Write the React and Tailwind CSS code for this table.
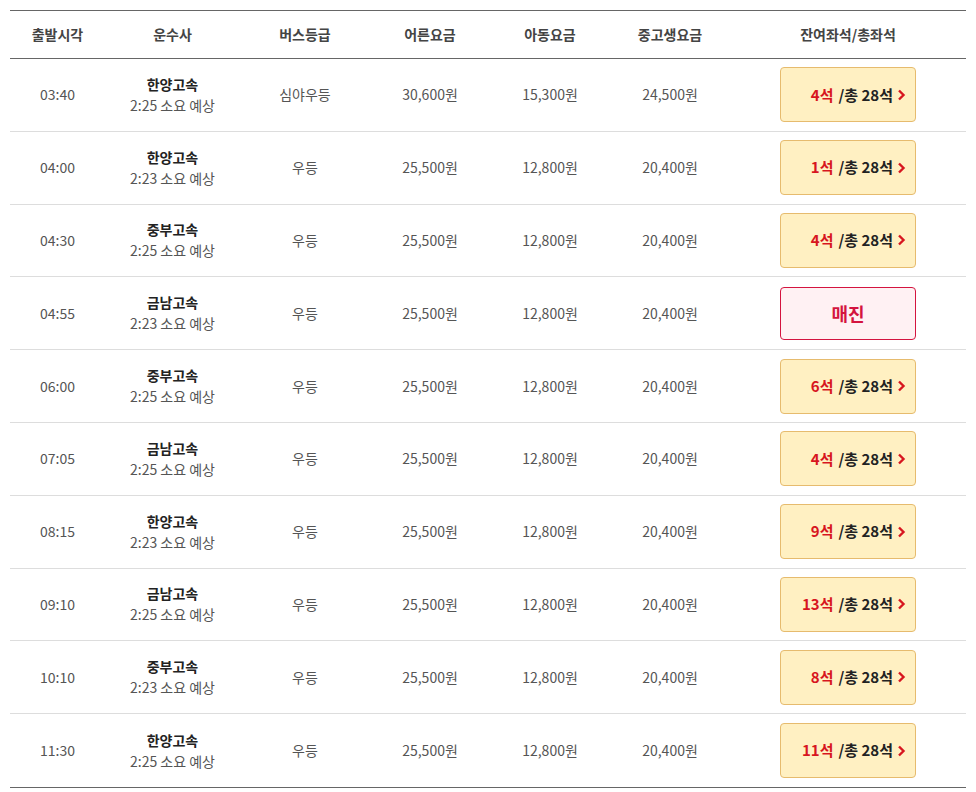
const ROWS = [
    { time: '03:40', company: '한양고속', dur: '2:25', grade: '심야우등', adult: '30,600원', child: '15,300원', teen: '24,500원', seats: 4 },
    { time: '04:00', company: '한양고속', dur: '2:23', grade: '우등', adult: '25,500원', child: '12,800원', teen: '20,400원', seats: 1 },
    { time: '04:30', company: '중부고속', dur: '2:25', grade: '우등', adult: '25,500원', child: '12,800원', teen: '20,400원', seats: 4 },
    { time: '04:55', company: '금남고속', dur: '2:23', grade: '우등', adult: '25,500원', child: '12,800원', teen: '20,400원', seats: 0 },
    { time: '06:00', company: '중부고속', dur: '2:25', grade: '우등', adult: '25,500원', child: '12,800원', teen: '20,400원', seats: 6 },
    { time: '07:05', company: '금남고속', dur: '2:25', grade: '우등', adult: '25,500원', child: '12,800원', teen: '20,400원', seats: 4 },
    { time: '08:15', company: '한양고속', dur: '2:23', grade: '우등', adult: '25,500원', child: '12,800원', teen: '20,400원', seats: 9 },
    { time: '09:10', company: '금남고속', dur: '2:25', grade: '우등', adult: '25,500원', child: '12,800원', teen: '20,400원', seats: 13 },
    { time: '10:10', company: '중부고속', dur: '2:23', grade: '우등', adult: '25,500원', child: '12,800원', teen: '20,400원', seats: 8 },
    { time: '11:30', company: '한양고속', dur: '2:25', grade: '우등', adult: '25,500원', child: '12,800원', teen: '20,400원', seats: 11 },
];

const COLS = 'grid grid-cols-[95px_135px_130px_120px_120px_120px_1fr]';

const SeatButton = ({ seats }) => {
    if (seats === 0) {
        return (
            <button className="w-[136px] h-[53px] rounded border border-[#d4143f] bg-[#fff1f3] text-[#d4143f] text-[18px] font-bold">
                매진
            </button>
        );
    }
    return (
        <button className="w-[136px] h-[55px] rounded border border-[#e6bb6e] bg-[#fff0c2] flex items-center justify-end pr-[9px] text-[15px] font-bold">
            <span className="text-[#d7161f]">{seats}석</span>
            <span className="text-[#222] ml-[5px]">/총 28석</span>
            <svg width="9" height="12" viewBox="0 0 9 12" className="ml-[4px]">
                <path d="M2 1.5 L6.5 6 L2 10.5" stroke="#d7161f" strokeWidth="2.4" fill="none" />
            </svg>
        </button>
    );
};

export default function App() {
    return (
        <div className="bg-white w-[976px] h-[792px] pt-[10px] px-[10px]" style={{ fontFamily: '"Noto Sans CJK KR", "Noto Sans", sans-serif' }}>
            <div className="w-[956px] border-t border-[#666] border-b">
                {/* Header */}
                <div className={`${COLS} h-[48px] items-center text-center text-[14px] font-bold text-[#444] border-b border-[#666]`}>
                    <div>출발시각</div>
                    <div>운수사</div>
                    <div>버스등급</div>
                    <div>어른요금</div>
                    <div>아동요금</div>
                    <div>중고생요금</div>
                    <div>잔여좌석/총좌석</div>
                </div>

                {/* Rows */}
                {ROWS.map((r, i) => (
                    <div
                        key={r.time}
                        className={`${COLS} h-[72.8px] items-center text-center text-[14px] text-[#555] ${i < ROWS.length - 1 ? 'border-b border-[#ddd]' : ''}`}
                    >
                        <div>{r.time}</div>
                        <div className="leading-[21px]">
                            <div className="font-bold text-[#222]">{r.company}</div>
                            <div>{r.dur} 소요 예상</div>
                        </div>
                        <div>{r.grade}</div>
                        <div>{r.adult}</div>
                        <div>{r.child}</div>
                        <div>{r.teen}</div>
                        <div className="flex justify-center">
                            <SeatButton seats={r.seats} />
                        </div>
                    </div>
                ))}
            </div>
        </div>
    );
}
